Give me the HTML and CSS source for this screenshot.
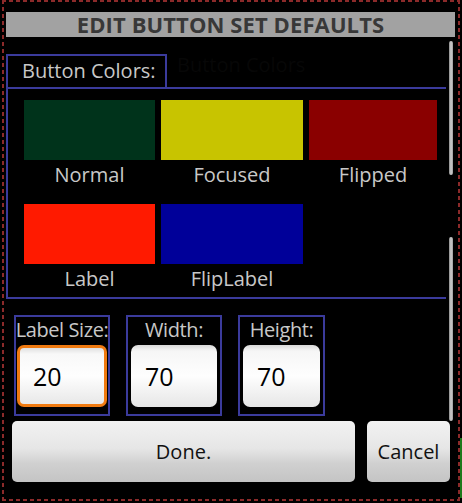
FILE: index.html
```html
<!DOCTYPE html>
<html>
<head>
<meta charset="utf-8">
<link rel="stylesheet" href="styles.css">
</head>
<body>
<div class="frame">
  <div class="title">EDIT BUTTON SET DEFAULTS</div>
  <div class="scroll">
    <div class="legend-row">
      <div class="legend">Button Colors:</div>
      <div class="ghost">Button Colors</div>
    </div>
    <div class="colors">
      <div class="swatch-item"><div class="swatch sw-normal"></div><div class="sw-label">Normal</div></div>
      <div class="swatch-item"><div class="swatch sw-focused"></div><div class="sw-label">Focused</div></div>
      <div class="swatch-item"><div class="swatch sw-flipped"></div><div class="sw-label">Flipped</div></div>
      <div class="swatch-item"><div class="swatch sw-label-c"></div><div class="sw-label">Label</div></div>
      <div class="swatch-item"><div class="swatch sw-fliplabel"></div><div class="sw-label">FlipLabel</div></div>
    </div>
    <div class="fields">
      <div class="field f-size">
        <div class="f-label">Label Size:</div>
        <div class="f-input focused">20</div>
      </div>
      <div class="field f-width">
        <div class="f-label">Width:</div>
        <div class="f-input">70</div>
      </div>
      <div class="field f-height">
        <div class="f-label">Height:</div>
        <div class="f-input">70</div>
      </div>
    </div>
  </div>
  <div class="buttons">
    <div class="btn btn-done">Done.</div>
    <div class="btn btn-cancel">Cancel</div>
  </div>
  <div class="thumb thumb-1"></div>
  <div class="thumb thumb-2"></div>
  <div class="green-edge"></div>
</div>
</body>
</html>
```

FILE: styles.css
```css
html, body {
  margin: 0;
  padding: 0;
  background: #000;
}
body {
  width: 462px;
  height: 503px;
  overflow: hidden;
  font-family: "Open Sans", "DejaVu Sans", sans-serif;
}
.frame {
  position: relative;
  box-sizing: border-box;
  width: 458px;
  height: 501px;
  margin-left: 2px;
  padding: 12px 5px 0 4px;
  background:
    repeating-linear-gradient(90deg, #8c2a2a 0 4px, transparent 4px 7px) left top / 100% 2px no-repeat,
    repeating-linear-gradient(90deg, #8c2a2a 0 4px, transparent 4px 7px) left bottom / 100% 2px no-repeat,
    repeating-linear-gradient(180deg, #8c2a2a 0 4px, transparent 4px 7px) left top / 2px 100% no-repeat,
    repeating-linear-gradient(180deg, #8c2a2a 0 4px, transparent 4px 7px) right top / 2px 100% no-repeat,
    #000;
}
.title {
  height: 25px;
  line-height: 25px;
  background: #a2a2a2;
  color: #383838;
  font-weight: bold;
  font-size: 22px;
  text-align: center;
  letter-spacing: 0.1px;
}
.scroll {
  height: 379px;
  padding-top: 16px;
  box-sizing: border-box;
}
.legend-row {
  display: flex;
  align-items: flex-end;
  width: 440px;
}
.legend {
  box-sizing: border-box;
  width: 161px;
  height: 33px;
  border: 2px solid #3b3b9c;
  border-bottom: none;
  color: #c8c8c8;
  font-size: 20px;
  line-height: 30px;
  padding-left: 14px;
}
.ghost {
  color: #070707;
  font-size: 20px;
  line-height: 24px;
  padding: 0 0 10px 10px;
  align-self: center;
}
.colors {
  box-sizing: border-box;
  width: 440px;
  border-top: 2px solid #3b3b9c;
  border-left: 2px solid #3b3b9c;
  border-bottom: 2px solid #3b3b9c;
  padding: 11px 0 3px 16px;
  display: grid;
  grid-template-columns: 131px 142px 128px;
  column-gap: 6px;
  row-gap: 14px;
}
.swatch {
  height: 60px;
}
.sw-normal { background: #00331b; }
.sw-focused { background: #c8c400; }
.sw-flipped { background: #8a0000; }
.sw-label-c { background: #ff1a00; }
.sw-fliplabel { background: #000099; }
.sw-label {
  color: #c8c8c8;
  font-size: 20px;
  line-height: 30px;
  text-align: center;
}
.fields {
  display: flex;
  gap: 16px;
  padding: 16px 0 0 8px;
}
.field {
  box-sizing: border-box;
  height: 101px;
  border: 2px solid #3b3b9c;
  display: flex;
  flex-direction: column;
  align-items: center;
}
.f-size { width: 96px; }
.f-width { width: 96px; }
.f-height { width: 87px; }
.f-label {
  color: #c8c8c8;
  font-size: 20px;
  line-height: 26px;
  height: 28px;
  letter-spacing: -0.4px;
  white-space: nowrap;
}
.f-input {
  box-sizing: border-box;
  width: calc(100% - 6px);
  height: 62px;
  border-radius: 7px;
  background: linear-gradient(180deg, #d8d8d8 0, #f6f6f6 6px, #fefefe 50%, #e6e6e6 100%);
  color: #000;
  font-size: 25px;
  line-height: 62px;
  padding-left: 14px;
}
.f-input.focused {
  width: calc(100% - 2px);
  border: 3px solid #f07a10;
  line-height: 56px;
  padding-left: 13px;
  background: linear-gradient(180deg, #e0e0e0 0, #f8f8f8 6px, #fefefe 50%, #e8e8e8 100%);
}
.buttons {
  display: flex;
  gap: 12px;
  padding: 5px 0 0 6px;
}
.btn {
  height: 61px;
  border-radius: 5px;
  background: linear-gradient(180deg, #f2f2f2 0, #e6e6e6 45%, #d0d0d0 70%, #c4c4c4 100%);
  color: #111;
  font-size: 20px;
  line-height: 61px;
  text-align: center;
}
.btn-done { width: 343px; }
.btn-cancel { width: 83px; }
.thumb {
  position: absolute;
  left: 447px;
  width: 4px;
  border-radius: 2px;
  background: linear-gradient(90deg, #8a8a8a, #d0d0d0 50%, #9a9a9a);
}
.thumb-1 { top: 41px; height: 134px; }
.thumb-2 { top: 237px; height: 184px; }
.green-edge {
  position: absolute;
  left: 458px;
  top: 438px;
  width: 2px;
  height: 60px;
  background: #1c7a1c;
}
```
